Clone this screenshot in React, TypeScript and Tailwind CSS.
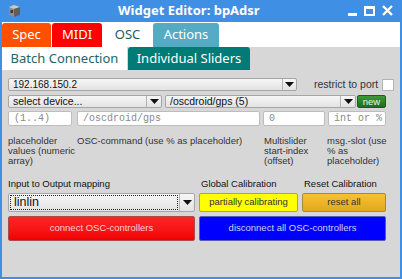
import React from "react";

const sans = "font-['Liberation_Sans',Arial,sans-serif]";
const mono = "font-['Liberation_Mono','Courier_New',monospace]";
const noto = "font-['Noto_Sans',sans-serif]";

const Arrow: React.FC = () => (
  <svg width="9" height="5" viewBox="0 0 9 5">
    <path d="M0 0h9L4.5 5z" fill="#111" />
  </svg>
);

const Combo: React.FC<{ text: string; className: string; arrowW?: string; dotted?: boolean }> = ({
  text,
  className,
  arrowW = "w-[15px]",
  dotted,
}) => (
  <div className={`flex items-stretch border border-[#a6a6a6] rounded-[2px] bg-gradient-to-b from-[#f6f6f6] to-[#e3e3e3] leading-none ${className}`}>
    <div className="flex-1 flex items-stretch p-[1px] overflow-hidden">
      <span
        className={`flex-1 flex items-center whitespace-nowrap pl-[3px] ${dotted ? "border border-dotted border-[#222]" : ""}`}
      >
        {text}
      </span>
    </div>
    <div className={`${arrowW} flex items-center justify-center border-l border-[#b4b4b4]`}>
      <Arrow />
    </div>
  </div>
);

const Field: React.FC<{ text: string; className: string }> = ({ text, className }) => (
  <div
    className={`flex items-center whitespace-nowrap bg-white border border-[#bdbdbd] rounded-[2px] pl-[5px] text-[10px] leading-none text-[#8a8a8a] ${mono} ${className}`}
  >
    {text}
  </div>
);

const App: React.FC = () => {
  return (
    <div className="w-[402px] h-[279px] bg-[#3f8fe4] flex flex-col overflow-hidden">
      {/* title bar */}
      <div className="h-[22px] flex items-center relative">
        <svg className="absolute left-[7px] top-[4px]" width="15" height="14" viewBox="0 0 15 14">
          <path d="M2 3l5-2 6 2v8l-6 2-5-2z" fill="#8d8d8d" />
          <path d="M2 3l5-2 6 2-6 2z" fill="#c9c9c9" />
          <path d="M7 5l6-2v8l-6 2z" fill="#5e5e5e" />
          <rect x="3.5" y="6" width="2.5" height="3" fill="#3a3a3a" />
        </svg>
        <div className={`w-full pl-[118px] text-white text-[13px] font-bold ${noto}`}>Widget Editor: bpAdsr</div>
        <div className="absolute right-[9px] top-[5px] flex items-center gap-[7px]">
          <div className="w-[9px] h-[11px] flex items-end"><div className="w-[9px] h-[3px] bg-white" /></div>
          <div className="w-[11px] h-[10px] border-2 border-white border-t-[3px]" />
          <svg width="11" height="11" viewBox="0 0 11 11">
            <path d="M1 1l9 9M10 1l-9 9" stroke="white" strokeWidth="2.4" />
          </svg>
        </div>
      </div>

      <div className="flex-1 mx-[2px] mb-[2px] flex flex-col bg-[#d7d7d7]">
        {/* top tabs */}
        <div className={`h-[25px] bg-white flex items-end gap-[1px] text-[13px] ${noto}`}>
          <div className="w-[49px] h-[24px] bg-[#ff5000] rounded-t-[3px] text-white flex items-center justify-center">Spec</div>
          <div className="w-[50px] h-[24px] bg-[#ff0000] rounded-t-[3px] text-white flex items-center justify-center">MIDI</div>
          <div className="w-[49px] h-[24px] text-[#1d5a5e] flex items-center justify-center">OSC</div>
          <div className="w-[66px] h-[24px] bg-[#55aac4] rounded-t-[3px] text-white flex items-center justify-center">Actions</div>
        </div>

        {/* sub tabs */}
        <div className={`h-[23px] flex items-stretch gap-[1px] text-[13px] ${noto}`}>
          <div className="w-[125px] bg-white text-[#1b6668] flex items-center justify-center">Batch Connection</div>
          <div className="w-[122px] bg-[#007b76] rounded-t-[3px] text-white flex items-center justify-center">Individual Sliders</div>
        </div>

        {/* content */}
        <div className={`flex-1 pl-[6px] pt-[8px] text-[9.5px] text-[#111] ${sans}`}>
          <div className="flex items-center h-[13px]">
            <Combo text="192.168.150.2" className="w-[289px] h-[13px] text-[10px]" arrowW="w-[14px]" />
            <span className="ml-[17px] text-[10.5px] leading-none text-[#333] whitespace-nowrap">restrict to port</span>
            <div className="ml-[4px] w-[12px] h-[12px] bg-white border border-[#b5b5b5]" />
          </div>

          <div className="flex items-center h-[13px] mt-[4px] text-[10.5px]">
            <Combo text="select device..." className="w-[154px] h-[13px]" />
            <Combo text="/oscdroid/gps (5)" className="ml-[3px] w-[191px] h-[13px]" />
            <div className="ml-[1px] w-[29px] h-[13px] rounded-[2px] border border-[#185f18] bg-gradient-to-b from-[#3a9a3a] to-[#1d6e1d] text-[9.5px] leading-none text-[#e6f2e6] flex items-center justify-center">
              new
            </div>
          </div>

          <div className="flex items-center h-[15px] mt-[3px]">
            <Field text="(1..4)" className="w-[64px] h-[15px]" />
            <Field text="/oscdroid/gps" className="ml-[5px] w-[183px] h-[15px]" />
            <Field text="0" className="ml-[3px] w-[62px] h-[15px]" />
            <Field text="int or %" className="ml-[3px] w-[58px] h-[15px]" />
          </div>

          <div className="flex mt-[10px] leading-[10px] text-[#333]">
            <div className="w-[68px]">placeholder values (numeric array)</div>
            <div className="ml-[1px] w-[187px]">OSC-command (use % as placeholder)</div>
            <div className="w-[63px]">Multislider start-index (offset)</div>
            <div className="w-[62px]">msg.-slot (use % as placeholder)</div>
          </div>

          <div className="flex mt-[13px] text-[#111] h-[10px] items-center leading-none">
            <div className="w-[193px]">Input to Output mapping</div>
            <div className="w-[103px]">Global Calibration</div>
            <div>Reset Calibration</div>
          </div>

          <div className="flex mt-[4px] h-[19px]">
            <Combo text="linlin" dotted className="w-[187px] h-[19px] text-[12.5px]" />
            <div className="ml-[4px] w-[99px] h-[19px] rounded-[2px] border border-[#a8a840] bg-[#ffff00] flex items-center justify-center text-[#333]">
              partially calibrating
            </div>
            <div className="ml-[4px] w-[84px] h-[19px] rounded-[2px] border border-[#a88a30] bg-gradient-to-b from-[#f5c232] to-[#e3a81c] flex items-center justify-center text-[#333]">
              reset all
            </div>
          </div>

          <div className="flex mt-[4px] h-[25px]">
            <div className="w-[187px] rounded-[2px] border border-[#b04a4a] bg-gradient-to-b from-[#ff2424] to-[#f00000] text-[#ffd0d0] flex items-center justify-center">
              connect OSC-controllers
            </div>
            <div className="ml-[4px] w-[187px] rounded-[2px] border border-[#5a5ab0] bg-[#0000ff] text-[#d0d0ff] flex items-center justify-center">
              disconnect all OSC-controllers
            </div>
          </div>
        </div>
      </div>
    </div>
  );
};

export default App;
